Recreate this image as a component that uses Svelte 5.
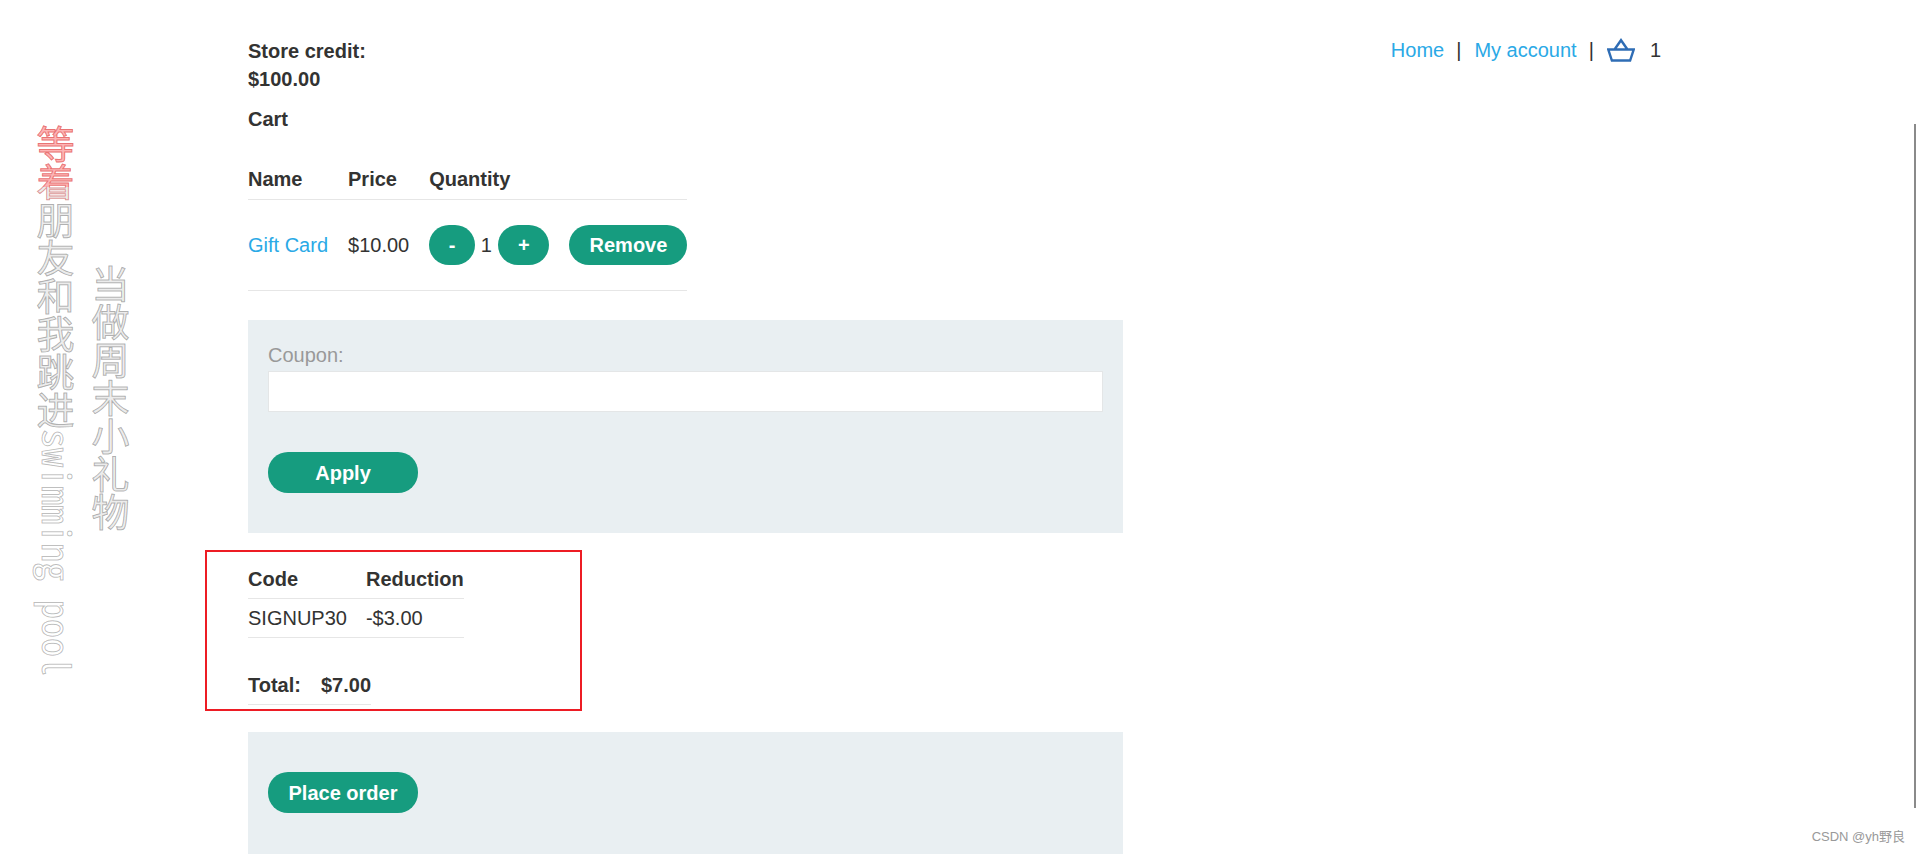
<script lang="ts">
    const items = [{ name: 'Gift Card', price: '$10.00', qty: 1 }];
    const side2 = '当做周末小礼物';
</script>

<div class="page">
    <div class="mark first"><span class="hot">等着</span>朋友和我跳进<span class="latin">swimming pool</span></div>
    <div class="mark second">{side2}</div>

    <main class="container">
        <div class="top">
            <div class="credit">
                <strong>Store credit:</strong>
                <strong>$100.00</strong>
            </div>
            <nav class="nav">
                <a href="#home">Home</a>
                <span class="pipe">|</span>
                <a href="#account">My account</a>
                <span class="pipe">|</span>
                <svg class="basket" viewBox="0 0 28 24" width="28" height="24" aria-hidden="true">
                    <path d="M1.3 11.5h25.4l-3.6 11h-18.2zM7.5 11.5 14 2.2l6.5 9.3" fill="none" stroke="#2f6db5" stroke-width="2.4" />
                </svg>
                <span class="count">1</span>
            </nav>
        </div>

        <strong class="heading">Cart</strong>

        <table class="cart">
            <thead>
                <tr><th>Name</th><th>Price</th><th colspan="2">Quantity</th></tr>
            </thead>
            <tbody>
                {#each items as item}
                    <tr>
                        <td><a href="#gift">{item.name}</a></td>
                        <td>{item.price}</td>
                        <td class="qty">
                            <button class="btn minus">-</button>
                            <span class="num">{item.qty}</span>
                            <button class="btn plus">+</button>
                        </td>
                        <td class="rm"><button class="btn remove">Remove</button></td>
                    </tr>
                {/each}
            </tbody>
        </table>

        <form class="panel coupon">
            <label for="coupon">Coupon:</label>
            <input id="coupon" type="text" />
            <button type="button" class="btn wide">Apply</button>
        </form>

        <div class="summary">
            <table class="codes">
                <thead>
                    <tr><th>Code</th><th>Reduction</th></tr>
                </thead>
                <tbody>
                    <tr><td>SIGNUP30</td><td>-$3.00</td></tr>
                </tbody>
            </table>
            <table class="total">
                <tbody>
                    <tr><th>Total:</th><th>$7.00</th></tr>
                </tbody>
            </table>
        </div>

        <div class="panel order">
            <button class="btn wide">Place order</button>
        </div>
    </main>

    <div class="scroll"></div>
    <div class="credit-mark">CSDN @yh野良</div>
</div>

<style>
    :global(body) {
        background: #fff;
        overflow: hidden;
    }

    .page {
        position: relative;
        height: 854px;
        overflow: hidden;
        font-family: "Liberation Sans", Arial, sans-serif;
        font-size: 20px;
        color: #333332;
    }

    .container {
        margin-left: 248px;
        width: 1413px;
        padding-top: 37px;
    }

    .top {
        display: flex;
        justify-content: space-between;
    }

    .credit {
        display: flex;
        flex-direction: column;
        line-height: 28px;
    }

    .nav {
        display: flex;
        align-items: center;
        height: 32px;
        margin-top: -3px;
        line-height: 32px;
    }

    .nav a, .cart a {
        color: #2aa9e6;
        text-decoration: none;
    }

    .pipe {
        margin: 0 13px 0 12px;
    }

    .basket {
        margin: 0 15px 0 0;
    }

    .heading {
        display: block;
        margin-top: 12px;
        line-height: 29px;
    }

    table {
        border-collapse: collapse;
    }

    th {
        text-align: left;
        font-weight: 700;
    }

    .cart {
        margin-top: 31px;
    }

    .cart th {
        padding: 0 20px 5px 0;
        height: 29px;
        border-bottom: 1px solid #e6e6e6;
    }

    .cart td {
        padding: 25px 20px 25px 0;
        height: 40px;
        border-bottom: 1px solid #e6e6e6;
        line-height: 40px;
    }

    .cart td.rm {
        padding-right: 0;
    }

    .cart .qty {
        white-space: nowrap;
    }

    .num {
        margin: 0 1px 0 0;
    }

    .btn {
        border: 0;
        height: 40px;
        border-radius: 20px;
        background: #169c7f;
        color: #fff;
        font: 700 20px/40px "Liberation Sans", Arial, sans-serif;
        padding: 0 20px;
        vertical-align: top;
    }

    .minus, .plus {
        padding: 0;
    }

    .minus { width: 46px; }
    .plus { width: 51px; }
    .remove { width: 118px; padding: 0; }

    .panel {
        width: 875px;
        background: #e9eff2;
        box-sizing: border-box;
        padding: 20px;
    }

    .coupon {
        margin-top: 29px;
        height: 213px;
        padding-top: 23px;
    }

    .coupon label {
        display: block;
        color: #999;
        line-height: 25px;
    }

    .coupon input {
        display: block;
        box-sizing: border-box;
        width: 100%;
        height: 41px;
        margin: 3px 0 40px;
        background: #fff;
        border: 1px solid #e4e6e7;
        padding: 0;
    }

    .wide {
        width: 150px;
        height: 41px;
        padding: 0;
    }

    .summary {
        margin-top: 17px;
        height: 182px;
        position: relative;
        padding-top: 10px;
        box-sizing: border-box;
    }

    /* the red annotation box drawn over the screenshot */
    .summary::before {
        content: "";
        position: absolute;
        left: -43px;
        top: 0;
        width: 377px;
        height: 161px;
        border: 2px solid #ed1c24;
        box-sizing: border-box;
    }

    .codes th, .codes td, .total th {
        height: 38px;
        padding: 0 19px 0 0;
        border-bottom: 1px solid #e6e6e6;
    }

    .codes th:last-child, .codes td:last-child, .total th:last-child {
        padding-right: 0;
    }

    .total th:first-child {
        padding-right: 20px;
    }

    .total {
        margin-top: 28px;
    }

    .order {
        height: 130px;
        padding-top: 40px;
    }

    .mark {
        position: absolute;
        writing-mode: vertical-rl;
        white-space: nowrap;
        font-family: "Noto Sans CJK SC", "Liberation Sans", sans-serif;
        font-feature-settings: "hwid";
        font-size: 38px;
        line-height: 44px;
        color: transparent;
        -webkit-text-stroke: 1px rgba(0, 0, 0, 0.27);
        background-clip: text;
        -webkit-background-clip: text;
        background-image: linear-gradient(#ececec, #ececec);
    }

    .first {
        left: 33px;
        top: 125px;
        background-image: linear-gradient(#fdb4b4 62px, #ececec 62px);
    }

    .hot {
        -webkit-text-stroke: 1px rgba(205, 20, 20, 0.42);
    }

    .latin {
        position: relative;
        left: 3px;
    }

    .second {
        left: 88px;
        top: 265px;
    }

    .scroll {
        position: absolute;
        right: 4px;
        top: 124px;
        width: 2px;
        height: 684px;
        background: #8a8a8a;
    }

    .credit-mark {
        position: absolute;
        right: 15px;
        bottom: 9px;
        font-size: 13px;
        line-height: 16px;
        font-family: "Liberation Sans", "Noto Sans CJK SC", sans-serif;
        color: #999;
    }
</style>
